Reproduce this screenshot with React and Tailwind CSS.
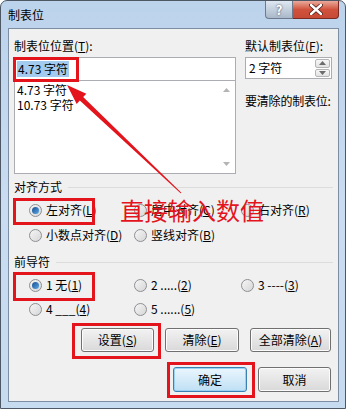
import React from 'react';

const font = "font-['Noto_Sans_CJK_SC','Noto_Sans',sans-serif]";

const Radio = ({ checked }) => (
    <span className="w-[13px] h-[13px] rounded-full border border-[#8c8f93] bg-gradient-to-br from-[#f6f6f6] to-[#d6d6d6] flex items-center justify-center shrink-0">
        {checked && <span className="w-[7px] h-[7px] rounded-full bg-gradient-to-br from-[#1a4f8f] to-[#5aa8e8]" />}
    </span>
);

const Option = ({ checked, children, className = '' }) => (
    <div className={`flex items-center gap-[4px] ${className}`}>
        <Radio checked={checked} />
        <span className="leading-[14px] whitespace-nowrap">{children}</span>
    </div>
);

const Btn = ({ children, w, primary }) => (
    <div
        className={`h-full ${w} rounded-[3px] border flex items-center justify-center bg-gradient-to-b ${
            primary
                ? 'border-[#3c7fb1] from-[#eaf6fd] to-[#bfe0f5] shadow-[inset_0_0_0_1px_#9ad2f3]'
                : 'border-[#707070] from-[#f2f2f2] to-[#d9d9d9] shadow-[inset_0_0_0_1px_#fcfcfc]'
        }`}
    >
        {children}
    </div>
);

const GroupLabel = ({ children }) => (
    <div className="flex items-center gap-[6px] h-[14px]">
        <span className="leading-[14px] shrink-0">{children}</span>
        <div className="flex-1 h-px bg-[#dcdcdc]" />
    </div>
);

const Tri = ({ up }) => (
    <svg width="7" height="4" viewBox="0 0 7 4">
        <path d={up ? 'M0 4 L3.5 0 L7 4 Z' : 'M0 0 L3.5 4 L7 0 Z'} fill="#6b6b6b" />
    </svg>
);

export default function App() {
    return (
        <div className={`relative w-[346px] h-[409px] overflow-hidden rounded-t-[7px] border border-[#4e5865] bg-gradient-to-b from-[#bcd3ec] via-[#c9dcf1] to-[#c6daf0] text-[12px] text-black ${font}`}>
            {/* title bar */}
            <div className="h-[27px] flex items-start justify-between">
                <span className="pl-[7px] pt-[6px] leading-[16px]">制表位</span>
                <div className="flex mr-[6px]">
                    <div className="w-[28px] h-[18px] rounded-bl-[4px] border border-t-0 border-[#6d7b8c] bg-gradient-to-b from-[#dfe8f2] to-[#a9b8c9] flex items-center justify-center text-white font-bold text-[13px] [text-shadow:0_0_2px_#334]">?</div>
                    <div className="w-[46px] h-[18px] rounded-br-[4px] border border-t-0 border-l-0 border-[#7a2a22] bg-gradient-to-b from-[#e9a99b] via-[#d0523c] to-[#c74a36] flex items-center justify-center">
                        <svg width="14" height="11" viewBox="0 0 14 11">
                            <path d="M2 1 L12 10 M12 1 L2 10" stroke="#4a1a14" strokeWidth="4" strokeLinecap="round" />
                            <path d="M2 1 L12 10 M12 1 L2 10" stroke="#fff" strokeWidth="2.4" strokeLinecap="round" />
                        </svg>
                    </div>
                </div>
            </div>

            {/* client area */}
            <div className="ml-[7px] w-[331px] h-[374px] border border-[#7e8ea2] bg-[#f0f0f0] pl-[5px] pr-[5px] pt-[10px] flex flex-col">
                <div className="flex gap-[9px]">
                    <div className="w-[222px] flex flex-col">
                        <div className="h-[14px] leading-[14px]">制表位位置(<u>T</u>):</div>
                        <div className="mt-[4px] h-[24px] border border-[#abadb3] bg-white flex items-center px-[2px]">
                            <span className="bg-[#a3cbef] px-[1px] leading-[16px]">4.73 字符</span>
                        </div>
                        <div className="-mt-px h-[94px] border border-[#abadb3] bg-white flex">
                            <div className="flex-1 pl-[2px] pt-[1px] leading-[15px]">
                                <div>4.73 字符</div>
                                <div>10.73 字符</div>
                            </div>
                            <div className="w-[17px] flex flex-col justify-between items-center py-[7px] opacity-50">
                                <Tri up />
                                <Tri />
                            </div>
                        </div>
                    </div>
                    <div className="w-[87px] flex flex-col">
                        <div className="h-[14px] leading-[14px] whitespace-nowrap">默认制表位(<u>F</u>):</div>
                        <div className="mt-[4px] h-[22px] border border-[#abadb3] bg-white flex items-center pl-[3px] pr-[1px]">
                            <span className="flex-1 leading-[16px]">2 字符</span>
                            <div className="w-[15px] h-[18px] flex flex-col gap-px">
                                <div className="flex-1 rounded-[2px] border border-[#b5b5b5] bg-gradient-to-b from-[#f7f7f7] to-[#e2e2e2] flex items-center justify-center"><Tri up /></div>
                                <div className="flex-1 rounded-[2px] border border-[#b5b5b5] bg-gradient-to-b from-[#f7f7f7] to-[#e2e2e2] flex items-center justify-center"><Tri /></div>
                            </div>
                        </div>
                        <div className="mt-[15px] h-[14px] leading-[14px] whitespace-nowrap tracking-[-0.2px]">要清除的制表位:</div>
                    </div>
                </div>

                <div className="mt-[6px]">
                    <GroupLabel>对齐方式</GroupLabel>
                </div>
                <div className="mt-[6px] h-[20px] flex items-center pl-[15px]">
                    <Option checked className="w-[105px]">左对齐(<u>L</u>)</Option>
                    <Option className="w-[107px]">居中对齐(<u>C</u>)</Option>
                    <Option>右对齐(<u>R</u>)</Option>
                </div>
                <div className="mt-[5px] h-[20px] flex items-center pl-[15px]">
                    <Option className="w-[105px]">小数点对齐(<u>D</u>)</Option>
                    <Option>竖线对齐(<u>B</u>)</Option>
                </div>

                <div className="mt-[10px]">
                    <GroupLabel>前导符</GroupLabel>
                </div>
                <div className="mt-[6px] h-[20px] flex items-center pl-[15px]">
                    <Option checked className="w-[105px]">1 无(<u>1</u>)</Option>
                    <Option className="w-[107px]">2 .....(<u>2</u>)</Option>
                    <Option>3 ----(<u>3</u>)</Option>
                </div>
                <div className="mt-[4px] h-[20px] flex items-center pl-[15px]">
                    <Option className="w-[105px]">4 ___(<u>4</u>)</Option>
                    <Option>5 ......(<u>5</u>)</Option>
                </div>

                <div className="mt-[9px] h-[24px] flex justify-end gap-[11px] pr-[2px]">
                    <Btn w="w-[73px]">设置(<u>S</u>)</Btn>
                    <Btn w="w-[74px]">清除(<u>E</u>)</Btn>
                    <Btn w="w-[81px]">全部清除(<u>A</u>)</Btn>
                </div>
                <div className="mt-[15px] h-[25px] flex justify-end gap-[11px] pr-[2px]">
                    <Btn w="w-[74px]" primary>确定</Btn>
                    <Btn w="w-[73px]">取消</Btn>
                </div>
            </div>

            {/* annotations */}
            <div className="absolute left-[12px] top-[56px] w-[66px] h-[25px] border-[3px] border-[#e3141c]" />
            <div className="absolute left-[12px] top-[197px] w-[82px] h-[27px] border-[3px] border-[#e3141c]" />
            <div className="absolute left-[12px] top-[271px] w-[82px] h-[29px] border-[3px] border-[#e3141c]" />
            <div className="absolute left-[71px] top-[322px] w-[89px] h-[36px] border-[3px] border-[#e3141c]" />
            <div className="absolute left-[166px] top-[361px] w-[88px] h-[36px] border-[3px] border-[#e3141c]" />
            <div className="absolute left-[119px] top-[194px] text-[24px] leading-[30px] text-[#e3141c]">直接输入数值</div>
            <svg className="absolute left-0 top-0" width="346" height="409">
                <polygon points="66,84 85.3,92.7 82.2,96 180.4,191.7 179.6,192.3 78.8,99.6 75.7,102.9" fill="#e3141c" />
            </svg>
        </div>
    );
}
